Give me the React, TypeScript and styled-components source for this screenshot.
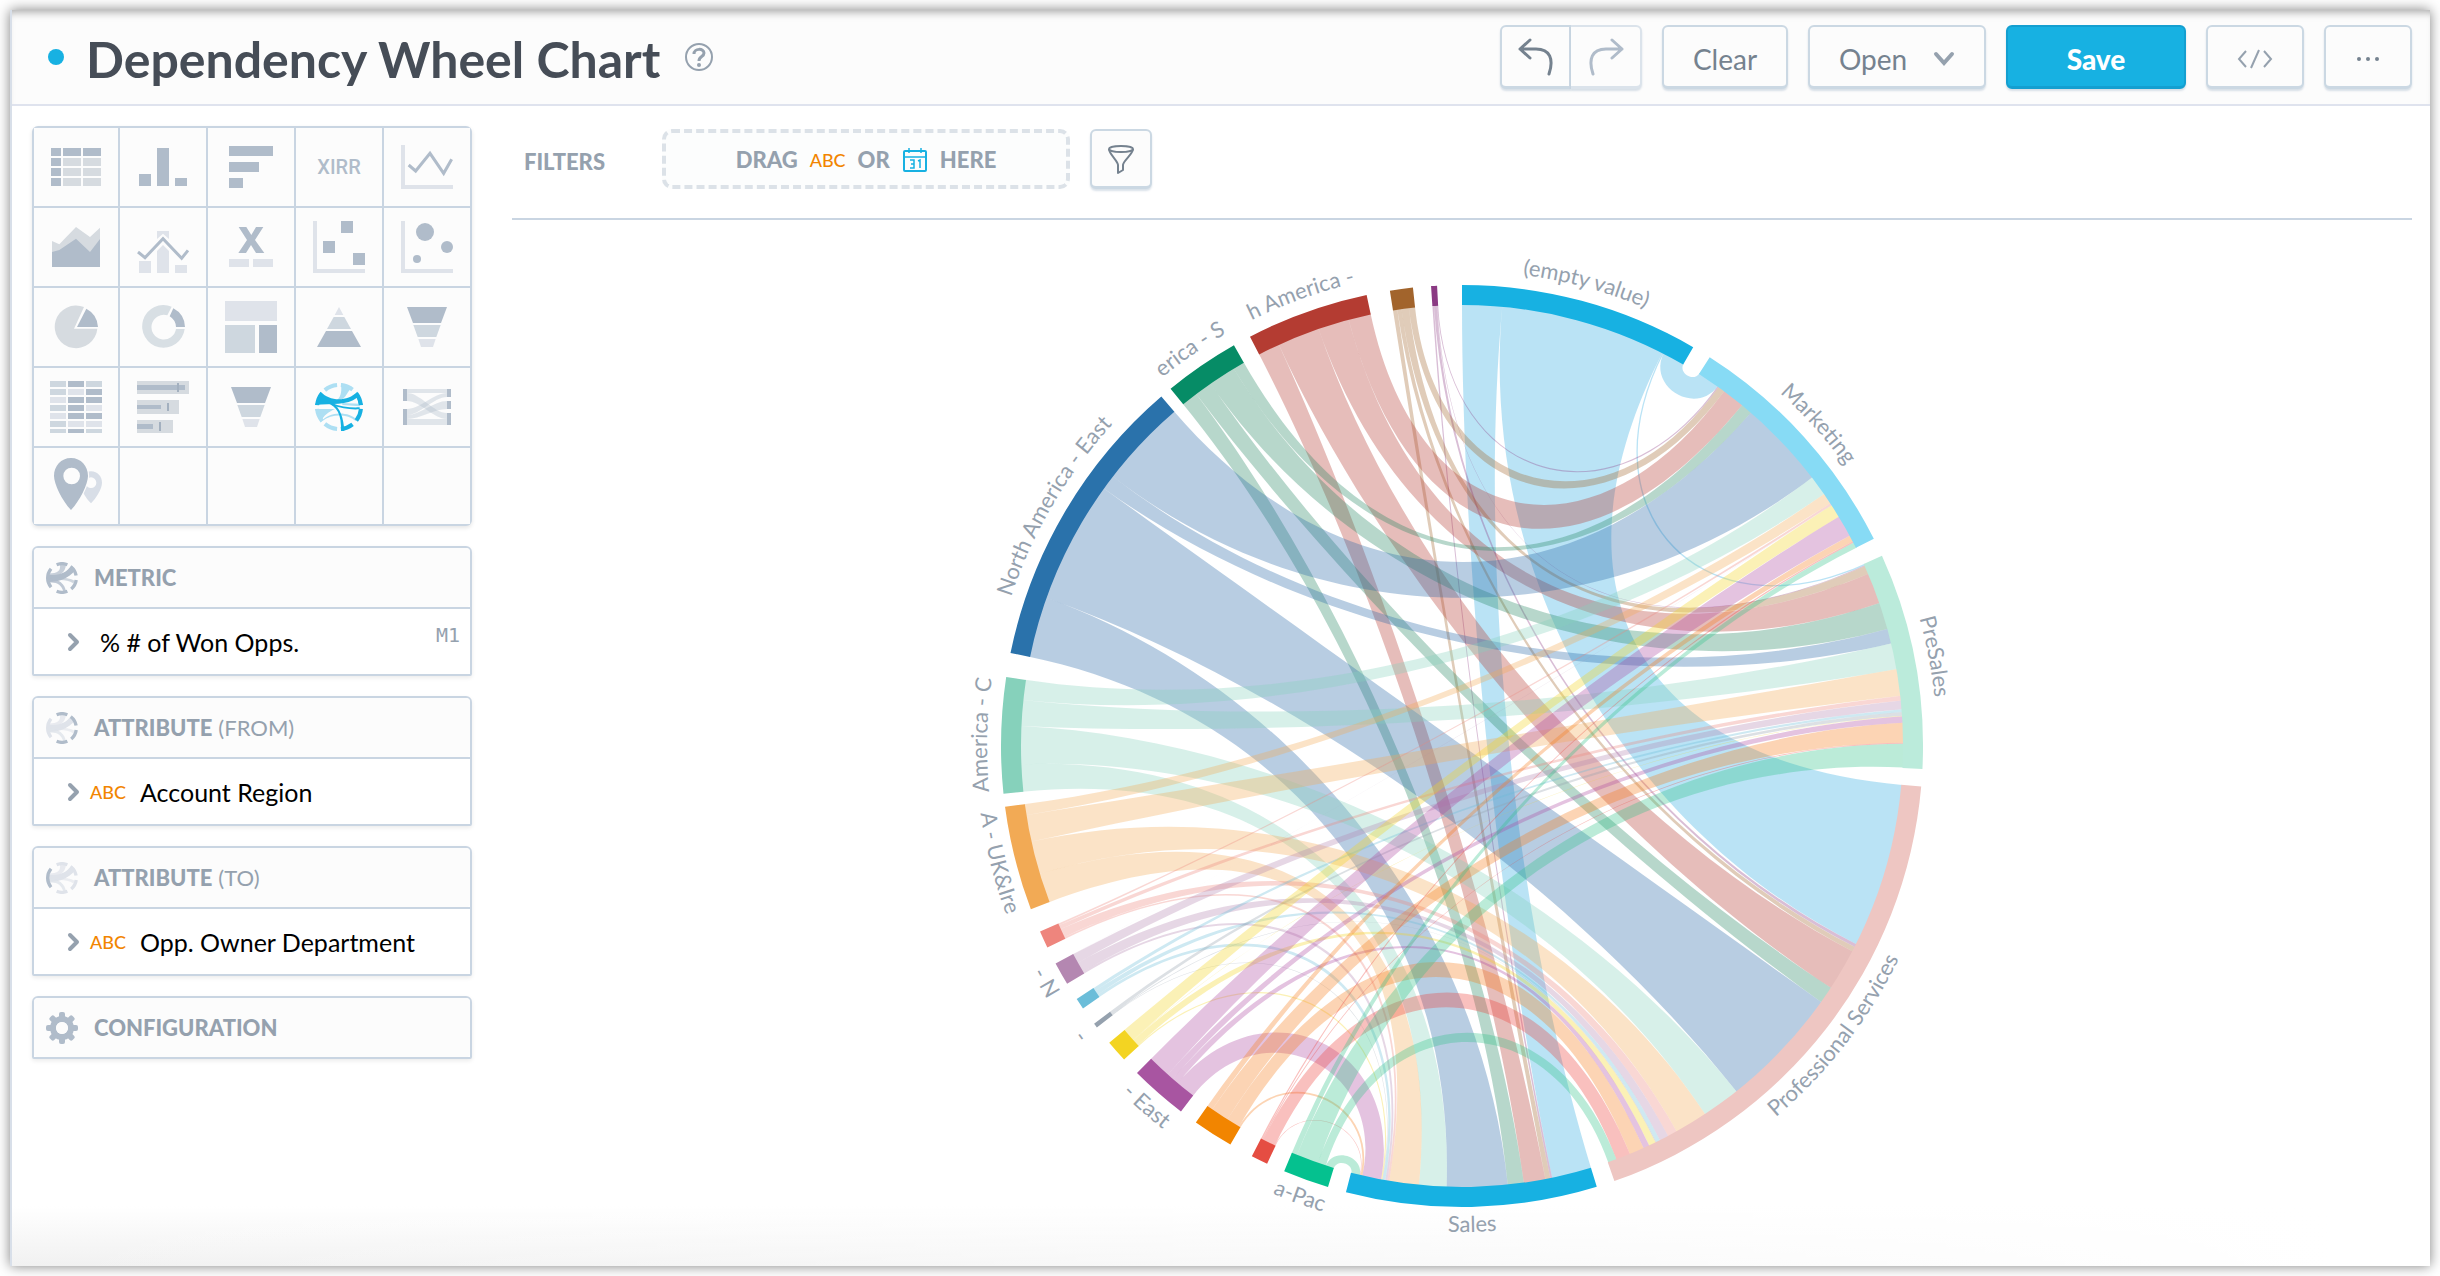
import React from "react";
import styled, { createGlobalStyle, css } from "styled-components";

const color = {
  line: "#c9d5e2",
  soft: "#dfe3ea",
  mist: "#d6dbe0",
  mid: "#ced7df",
  icon: "#b0bcca",
  label: "#95a1ae",
  slate: "#75828f",
  ink: "#464d57",
  blue: "#17b1e2",
  orange: "#f28500",
  panel: "#fcfcfc",
};

const GlobalStyle = createGlobalStyle`
  *, *::before, *::after { box-sizing: border-box; }
  body {
    margin: 0;
    background: #fff;
    font-family: Lato, "Open Sans", sans-serif;
    color: #000;
  }
  button { font: inherit; color: inherit; cursor: pointer; margin: 0; }
  h1, h2, p { margin: 0; }
  svg { display: block; }
`;

const Page = styled.div`
  min-height: 100vh;
  padding: 10px;
  display: flex;
`;

const Frame = styled.main`
  flex: 1;
  min-width: 0;
  display: flex;
  flex-direction: column;
  border-left: 2px solid #d8dfe9;
  background:
    linear-gradient(to right, rgba(255, 255, 255, 0), #fff 96%) bottom / 100% 60px no-repeat,
    linear-gradient(to bottom, #fff, #f1f1f1) bottom / 100% 60px no-repeat,
    #fff;
  box-shadow: 0 0 12px rgba(0, 0, 0, 0.5);
`;

const Header = styled.header`
  display: flex;
  align-items: center;
  justify-content: space-between;
  height: 96px;
  padding: 0 18px 0 36px;
  border-bottom: 2px solid #dfe3ee;
  background: ${color.panel};
  box-shadow: inset 0 8px 8px -6px rgba(0, 0, 0, 0.35);
`;

const TitleGroup = styled.div`
  display: flex;
  align-items: center;
`;

const StatusDot = styled.span`
  width: 16px;
  height: 16px;
  border-radius: 50%;
  background: ${color.blue};
  margin-right: 22px;
`;

const Title = styled.h1`
  padding-top: 4px;
  font-size: 50px;
  line-height: 60px;
  font-weight: 700;
  color: ${color.ink};
`;

const HelpButton = styled.button`
  padding: 0;
  margin-left: 24px;
  border: 0;
  background: none;
  color: ${color.label};
`;

const Actions = styled.div`
  display: flex;
  gap: 20px;
`;

const raised = css`
  display: flex;
  align-items: center;
  justify-content: center;
  border: 2px solid #cbd8e3;
  border-radius: 6px;
  background: ${color.panel};
  color: ${color.slate};
  box-shadow: 0 2px 2px rgba(160, 180, 200, 0.4);
`;

const ActionButton = styled.button<{ $width: number; $primary?: boolean }>`
  ${raised}
  width: ${(p) => p.$width}px;
  height: 64px;
  padding: 4px 0 0;
  gap: 26px;
  font-size: 28px;
  line-height: 36px;
  border-bottom-width: 3px;
  ${(p) =>
    p.$primary &&
    css`
      background: ${color.blue};
      border-color: #149fd0;
      color: #fff;
      font-weight: 900;
    `}
`;

const HistoryGroup = styled.div`
  display: flex;
  border-radius: 6px;
`;

const HistoryButton = styled.button<{ $side: "left" | "right" }>`
  ${raised}
  width: 71px;
  height: 64px;
  padding: 0;
  border-bottom-width: 3px;
  ${(p) =>
    p.$side === "left"
      ? css`
          border-radius: 6px 0 0 6px;
        `
      : css`
          border-radius: 0 6px 6px 0;
          border-left: 0;
          border-color: #dbe3eb;
          color: ${color.icon};
        `}
`;

const Body = styled.div`
  flex: 1;
  display: flex;
  align-items: flex-start;
  gap: 40px;
  padding: 20px 18px 0 20px;
`;

const Sidebar = styled.aside`
  flex: 0 0 440px;
  display: flex;
  flex-direction: column;
  gap: 20px;
`;

const ChartPicker = styled.div`
  display: grid;
  grid-template-columns: 84px repeat(4, 1fr);
  grid-template-rows: repeat(4, 78px) 76px;
  gap: 2px;
  padding: 2px;
  border-radius: 6px;
  background: ${color.line};
  overflow: hidden;
  box-shadow: 0 2px 4px rgba(0, 0, 0, 0.1);
`;

const ChartCell = styled.button`
  display: flex;
  align-items: center;
  justify-content: center;
  padding: 0;
  border: 0;
  background: ${color.panel};
`;

const EmptyCell = styled.div`
  background: ${color.panel};
`;

const PickerText = styled.span`
  font-family: Roboto, sans-serif;
  font-size: 20px;
  font-weight: 500;
  color: ${color.icon};
`;

const Panel = styled.section`
  border: 2px solid ${color.line};
  border-radius: 6px 6px 2px 2px;
  background: #fff;
  box-shadow: 0 2px 4px rgba(0, 0, 0, 0.08);
`;

const PanelHeader = styled.h2`
  display: flex;
  align-items: center;
  gap: 16px;
  height: 59px;
  padding: 0 12px;
  border-radius: 4px;
  background: ${color.panel};
  font-size: 22px;
  line-height: 28px;
  font-weight: 900;
  color: ${color.label};

  small {
    font-size: 22px;
    font-weight: 400;
    margin-left: -10px;
  }
`;

const PanelRow = styled.button`
  display: flex;
  align-items: center;
  width: 100%;
  height: 67px;
  padding: 0 10px 0 32px;
  border: 0;
  border-top: 2px solid ${color.line};
  background: #fff;
  text-align: left;
`;

const FieldName = styled.span<{ $gap: number }>`
  margin-left: ${(p) => p.$gap}px;
  font-size: 25px;
  line-height: 32px;
`;

const TextType = styled.span`
  margin-left: 10px;
  font-size: 18px;
  line-height: 24px;
  font-weight: 500;
  color: ${color.orange};
`;

const MetricId = styled.span`
  align-self: flex-start;
  margin-left: auto;
  padding-top: 12px;
  font-family: "DejaVu Sans Mono", monospace;
  font-size: 20px;
  line-height: 28px;
  color: ${color.label};
`;

const Content = styled.section`
  flex: 1;
  min-width: 0;
  display: flex;
  flex-direction: column;
`;

const FilterBar = styled.div`
  display: flex;
  align-items: flex-start;
  height: 94px;
  padding: 3px 0 0 12px;
  border-bottom: 2px solid ${color.line};
`;

const FilterTitle = styled.h2`
  width: 138px;
  font-size: 22px;
  line-height: 66px;
  font-weight: 900;
  color: ${color.label};
`;

const DropZone = styled.div`
  display: flex;
  align-items: center;
  justify-content: center;
  gap: 12px;
  width: 408px;
  height: 60px;
  padding-top: 2px;
  border: 4px dashed #dce2e8;
  border-radius: 10px;
  background: #fcfdfd;
  font-size: 22px;
  line-height: 28px;
  font-weight: 900;
  color: ${color.label};
`;

const DropType = styled.span`
  font-size: 18px;
  font-weight: 500;
  color: ${color.orange};
`;

const FilterButton = styled.button`
  ${raised}
  width: 62px;
  height: 60px;
  margin-left: 20px;
  padding: 0;
  border-bottom-width: 3px;
`;

const Chart = styled.figure`
  margin: 6px 0 0;
  display: flex;
  justify-content: center;

  svg {
    width: 100%;
    max-width: 1040px;
    height: auto;
  }
`;

const WheelLabel = styled.text`
  font-size: 22px;
  fill: ${color.label};
`;

/* ---------- wheel data ---------- */

const CENTER = { x: 0, y: 0 };
const OUTER = 461;
const INNER = 441;
const CURVE = 0.6;

type Target = { name: string; color: string; start: number; end: number; bounds: number[] };
type Source = { name: string; color: string; link?: string; start: number; end: number };

// Receiving arcs; bounds hold the angle at which each source's share ends, clockwise.
const targets: Target[] = [
  {
    name: "Marketing", color: "#87dbf5", start: 32.5, end: 63.3,
    bounds: [35.4, 35.55, 36.48, 39.42, 40.91, 52.51, 55.17, 56.6, 56.88, 56.91, 56.91, 56.91, 58.67, 61.53, 62.35, 62.55, 63.3],
  },
  {
    name: "PreSales", color: "#bbebdb", start: 65.64, end: 92.86,
    bounds: [65.82, 65.92, 67.04, 71.1, 74.62, 76.56, 79.96, 83.48, 84.08, 85.22, 85.6, 86.08, 86.15, 87, 89.57, 89.72, 92.8],
  },
  {
    name: "Professional Services", color: "#eec6c2", start: 95.05, end: 160.7,
    bounds: [116.67, 117.1, 117.73, 123.25, 125.48, 141.54, 146.56, 150.88, 152.14, 153.34, 153.85, 153.97, 154.89, 155.7, 157.62, 159.51, 160.65],
  },
  {
    name: "Sales", color: color.blue, start: 163, end: 194.58,
    bounds: [168.2, 168.45, 169.1, 171.94, 174.04, 182, 185.6, 189.49, 189.75, 190.02, 190.35, 190.42, 190.57, 193.06, 193.3, 193.38, 194.5],
  },
];

// Sending arcs, in the order in which the receiving arcs list them.
const sources: Source[] = [
  { name: "(empty value)", color: color.blue, link: "#2eaae1", start: 0, end: 30.1 },
  { name: "", color: "#8b3a83", start: 356.15, end: 356.9 },
  { name: "", color: "#a2642c", start: 351, end: 353.89 },
  { name: "h America -", color: "#b43c32", link: "#b3372e", start: 332.62, end: 348.06 },
  { name: "erica - S", color: "#068c66", link: "#258661", start: 320.79, end: 330.35 },
  { name: "North America - East", color: "#2a72ab", link: "#2867a7", start: 281.65, end: 319.29 },
  { name: "America - C", color: "#86d1bb", start: 264.06, end: 278.61 },
  { name: "A - UK&Ire", color: "#f2aa55", start: 249.27, end: 262.42 },
  { name: "", color: "#ee857d", start: 244.09, end: 246.26 },
  { name: "- N", color: "#b487b1", start: 238.94, end: 241.84 },
  { name: "", color: "#6bbdd9", start: 235.3, end: 236.7 },
  { name: "-", color: "#95a1ae", start: 232.38, end: 232.95 },
  { name: "", color: "#f3d422", start: 227.14, end: 229.93 },
  { name: "- East", color: "#a855a1", link: "#ad49a1", start: 217.56, end: 224.83 },
  { name: "", color: "#f28500", link: "#f67d1c", start: 210.16, end: 215.26 },
  { name: "", color: "#e54d42", link: "#ed4039", start: 205.01, end: 207.12 },
  { name: "a-Pac", color: "#05c18f", link: "#31c289", start: 196.9, end: 202.69 },
];

const rad = (deg: number) => (deg * Math.PI) / 180;
const at = (deg: number, r: number) => ({
  x: CENTER.x + Math.sin(rad(deg)) * r,
  y: CENTER.y - Math.cos(rad(deg)) * r,
});
const pt = (p: { x: number; y: number }) => `${p.x.toFixed(2)} ${p.y.toFixed(2)}`;

function ringPath(a: number, b: number, outer: number, inner: number) {
  const big = b - a > 180 ? 1 : 0;
  return `M${pt(at(a, outer))}A${outer} ${outer} 0 ${big} 1 ${pt(at(b, outer))}L${pt(at(b, inner))}A${inner} ${inner} 0 ${big} 0 ${pt(at(a, inner))}Z`;
}

function linkPath(base: [number, number, number, number]) {
  const corners = base.map((angle, i) => {
    let distance = Math.abs(rad(base[3 - i] - angle));
    if (distance > Math.PI) distance = 2 * Math.PI - distance;
    const curve = distance < 1 ? CURVE * distance : CURVE;
    return { p: at(angle, INNER + 1), c: at(angle, (INNER + 1) * (1 - curve)) };
  });
  const arc = `A${INNER} ${INNER} 0 0 1`;
  return `M${pt(corners[0].p)}${arc} ${pt(corners[1].p)}C${pt(corners[1].c)} ${pt(corners[2].c)} ${pt(corners[2].p)}${arc} ${pt(corners[3].p)}C${pt(corners[3].c)} ${pt(corners[0].c)} ${pt(corners[0].p)}Z`;
}

const links = sources.flatMap((source, s) => {
  const shares = targets.map((t) => {
    const from = s === 0 ? t.start : t.bounds[s - 1];
    return { from, to: t.bounds[s], width: t.bounds[s] - from };
  });
  const total = shares.reduce((sum, share) => sum + share.width, 0);
  const scale = (source.end - source.start) / total;
  let cursor = source.start;
  return [...shares]
    .reverse()
    .filter((share) => share.width > 0.005)
    .map((share) => {
      const start = cursor;
      cursor += share.width * scale;
      return { fill: source.link ?? source.color, d: linkPath([start, cursor, share.from, share.to]) };
    });
});

function labelPath(start: number, end: number) {
  const middle = (start + end) / 2;
  const reversed = middle > 90 && middle < 270;
  const r = reversed ? OUTER + 25 : OUTER + 14;
  const from = at(reversed ? middle + 40 : middle - 40, r);
  const to = at(reversed ? middle - 40 : middle + 40, r);
  return `M${pt(from)}A${r} ${r} 0 0 ${reversed ? 0 : 1} ${pt(to)}`;
}

function DependencyWheel() {
  const nodes = [...targets, ...sources];
  return (
    <svg viewBox="-520 -520 1040 1020" role="img" aria-label="Dependency wheel of account regions and departments">
      <g fillOpacity={0.33}>
        {links.map((link, i) => (
          <path key={i} d={link.d} fill={link.fill} />
        ))}
      </g>
      {nodes.map((node, i) => (
        <path key={i} d={ringPath(node.start, node.end, OUTER, INNER)} fill={node.color} />
      ))}
      {nodes.map((node, i) =>
        node.name ? (
          <React.Fragment key={i}>
            <path id={`rim-${i}`} d={labelPath(node.start, node.end)} fill="none" />
            <WheelLabel textAnchor="middle">
              <textPath href={`#rim-${i}`} startOffset="50%">
                {node.name}
              </textPath>
            </WheelLabel>
          </React.Fragment>
        ) : null
      )}
    </svg>
  );
}

/* ---------- icons ---------- */

const PickerIcon = ({ children }: { children: React.ReactNode }) => (
  <svg width="56" height="56" viewBox="-84 -84 168 168" aria-hidden="true">
    {children}
  </svg>
);

type Box = [number, number, number, number];
const Boxes = ({ fill, list }: { fill: string; list: Box[] }) => (
  <g fill={fill}>
    {list.map(([x, y, w, h], i) => (
      <rect key={i} x={x} y={y} width={w} height={h} />
    ))}
  </g>
);

const axes: Box[] = [
  [-78, -78, 12, 156],
  [-78, 66, 156, 12],
];

const tableCols = [[-75, 30], [-39, 54], [21, 54]];
const tableRows = [-57, -27, 3, 33];
const heatCols = [-78, -24, 30];
const heatRows = ["mdm", "mld", "ldd", "mdl", "ldd", "mll", "mdm"];
const heatFill: Record<string, string> = { m: color.mid, d: color.icon, l: color.soft };

const Funnel = () => (
  <PickerIcon>
    <path d="M-60-60H60L42-12H-42Z" fill={color.icon} />
    <path d="M-41-6H41L28 30H-28Z" fill={color.mid} />
    <path d="M-26 36H26L18 60H-18Z" fill={color.soft} />
  </PickerIcon>
);

const Arcs = ({ list, r, width }: { list: [number, number, string][]; r: number; width: number }) => (
  <>
    {list.map(([a, b, fill]) => (
      <path key={a} d={ringPath(a, b, r, r - width)} fill={fill} />
    ))}
  </>
);

const pale = "#addff3";
const pickers: { name: string; icon: React.ReactNode }[] = [
  {
    name: "Table",
    icon: (
      <PickerIcon>
        {tableRows.map((y, r) =>
          tableCols.map(([x, w], c) => (
            <rect key={`${r}${c}`} x={x} y={y} width={w} height={24} fill={r === 0 || c === 0 ? color.icon : color.mist} />
          ))
        )}
      </PickerIcon>
    ),
  },
  {
    name: "Column chart",
    icon: (
      <PickerIcon>
        <Boxes fill={color.icon} list={[[-72, 21, 36, 36], [-18, -57, 36, 114], [36, 33, 36, 24]]} />
      </PickerIcon>
    ),
  },
  {
    name: "Bar chart",
    icon: (
      <PickerIcon>
        <Boxes fill={color.icon} list={[[-66, -63, 132, 30], [-66, -15, 90, 30], [-66, 33, 42, 30]]} />
      </PickerIcon>
    ),
  },
  { name: "XIRR", icon: <PickerText>XIRR</PickerText> },
  {
    name: "Line chart",
    icon: (
      <PickerIcon>
        <Boxes fill={color.soft} list={[[-78, -66, 12, 132], [-78, 54, 156, 12]]} />
        <path d="M-55-6L-34 12L9-41L50 19L74-23" fill="none" stroke={color.icon} strokeWidth="9" />
      </PickerIcon>
    ),
  },
  {
    name: "Area chart",
    icon: (
      <PickerIcon>
        <path d="M-72-18L-50-8L0-60L42-30L72-58V60H-72Z" fill={color.mist} />
        <path d="M-72 15L-50 9L0-25L42 15L72-24V60H-72Z" fill={color.icon} />
      </PickerIcon>
    ),
  },
  {
    name: "Combo chart",
    icon: (
      <PickerIcon>
        <Boxes fill={color.soft} list={[[-72, 42, 36, 36], [36, 54, 36, 24]]} />
        <path d="M-18-48H18V-24L0-40L-18-24ZM-18 12L0-6L18 12V78H-18Z" fill={color.soft} />
        <path d="M-75 15L-54 32L0-25L56 34L75 10" fill="none" stroke={color.icon} strokeWidth="9" />
      </PickerIcon>
    ),
  },
  {
    name: "Headline",
    icon: (
      <PickerIcon>
        <path d="M-37-60H-14L1-36L15-60H37L12-21L40 18H15L0-6L-15 18H-38L-12-21Z" fill={color.icon} />
        <Boxes fill={color.soft} list={[[-66, 36, 60, 24], [6, 36, 60, 24]]} />
      </PickerIcon>
    ),
  },
  {
    name: "Scatter plot",
    icon: (
      <PickerIcon>
        <Boxes fill={color.soft} list={axes} />
        <Boxes fill={color.icon} list={[[6, -78, 36, 36], [-48, -18, 36, 36], [42, 18, 36, 36]]} />
      </PickerIcon>
    ),
  },
  {
    name: "Bubble chart",
    icon: (
      <PickerIcon>
        <Boxes fill={color.soft} list={axes} />
        <g fill={color.icon}>
          <circle cx="-6" cy="-45" r="27" />
          <circle cx="60" cy="0" r="18" />
          <circle cx="-30" cy="36" r="12" />
        </g>
      </PickerIcon>
    ),
  },
  {
    name: "Pie chart",
    icon: (
      <PickerIcon>
        <path d="M-6 5L24-60A64 64 0 1 0 64 5Z" fill={color.mist} />
        <path d="M3 0L31-55A66 66 0 0 1 66 0Z" fill={color.icon} />
      </PickerIcon>
    ),
  },
  {
    name: "Donut chart",
    icon: (
      <PickerIcon>
        <path d="M26-61A64 64 0 1 0 65 6H39A37 37 0 1 1 13-35Z" fill="#d8dfe4" />
        <path d="M31-56A66 66 0 0 1 66 0H39A40 40 0 0 0 20-32Z" fill={color.icon} />
      </PickerIcon>
    ),
  },
  {
    name: "Tree map",
    icon: (
      <PickerIcon>
        <Boxes fill={color.soft} list={[[-78, -78, 156, 60]]} />
        <Boxes fill={color.mid} list={[[-78, -6, 90, 84]]} />
        <Boxes fill={color.icon} list={[[24, -6, 54, 84]]} />
      </PickerIcon>
    ),
  },
  {
    name: "Pyramid chart",
    icon: (
      <PickerIcon>
        <path d="M0-60L13-36H-13Z" fill={color.soft} />
        <path d="M-16-30H16L36 6H-36Z" fill={color.mid} />
        <path d="M-39 12H39L66 60H-66Z" fill={color.icon} />
      </PickerIcon>
    ),
  },
  { name: "Funnel chart", icon: <Funnel /> },
  {
    name: "Heat map",
    icon: (
      <PickerIcon>
        {heatRows.map((row, r) =>
          heatCols.map((x, c) => (
            <rect key={`${r}${c}`} x={x} y={-78 + r * 24} width={48} height={r === 6 ? 12 : 18} fill={heatFill[row[c]]} />
          ))
        )}
      </PickerIcon>
    ),
  },
  {
    name: "Bullet chart",
    icon: (
      <PickerIcon>
        <Boxes fill={color.mist} list={[[-78, -78, 156, 39], [-78, -21, 126, 42], [-78, 39, 108, 39]]} />
        <Boxes fill={color.icon} list={[[-78, -66, 144, 15], [-78, -6, 72, 12], [-78, 51, 48, 15]]} />
        <Boxes fill="#a3b0bf" list={[[42, -72, 6, 27], [12, -12, 6, 24], [-12, 45, 6, 27]]} />
      </PickerIcon>
    ),
  },
  { name: "Conversion funnel", icon: <Funnel /> },
  {
    name: "Dependency wheel chart",
    icon: (
      <PickerIcon>
        <g fill={pale}>
          <path d="M6-72L40-60C18-40 22-20 -6-20C8-34 8-50 6-72Z" />
          <path d="M-72 6H-12C-30 14 -46 24 -55 46Z" />
          <path d="M-55 46C-34 14 26 10 54 38L50 42C24 20 -20 20 -50 42Z" />
          <path d="M10-12L62-10V-2L10-6Z" />
        </g>
        <g fill={color.blue}>
          <path d="M-55-46C-30-18 24-14 55-46L72-6H60L54-28C24-4 -20-12 -72-6Z" />
          <path d="M-36-12C-6-2 8 22 6 72H16C14 34 4 4 -20-14Z" />
          <path d="M-20-11C6 0 34 2 62 1V7C34 9 6 4 -20-5Z" />
        </g>
        <Arcs
          r={72}
          width={12}
          list={[[-40, -5, pale], [5, 38, pale], [185, 220, pale], [230, 265, pale], [52, 85, color.blue], [95, 128, color.blue], [142, 175, color.blue], [275, 309, color.blue]]}
        />
      </PickerIcon>
    ),
  },
  {
    name: "Sankey chart",
    icon: (
      <PickerIcon>
        <g fill={color.icon} fillOpacity="0.36">
          <path d="M-60-54H60V-42H-60Z" />
          <path d="M-60-42C-20-42 20 18 60 18V36C20 36-20-18-60-18Z" />
          <path d="M-60 6C-20 6 20-42 60-42V-30C20-30-20 24-60 24Z" />
          <path d="M-60 24C-20 24 20-18 60-18V6C20 6-20 36-60 36Z" />
          <path d="M-60 36H60V54H-60Z" />
        </g>
        <Boxes fill={color.icon} list={[[-72, -54, 12, 36], [-72, 6, 12, 48], [60, -54, 12, 24], [60, -18, 12, 24], [60, 18, 12, 36]]} />
      </PickerIcon>
    ),
  },
  {
    name: "Geo map",
    icon: (
      <PickerIcon>
        <path fillRule="evenodd" d="M45-44C65-44 78-28 78-10C78 10 60 36 45 52C30 36 12 10 12-10C12-28 25-44 45-44ZM45-26A15 15 0 1 0 45 6A15 15 0 1 0 45-26Z" fill="#d8dee7" />
        <path fillRule="evenodd" stroke={color.panel} strokeWidth="7" paintOrder="stroke" d="M-15-84C15-84 36-60 36-30C36-6 12 44-15 72C-42 44-66-6-66-30C-66-60-45-84-15-84ZM-13-55A25 25 0 1 0-13-5A25 25 0 1 0-13-55Z" fill={color.icon} />
      </PickerIcon>
    ),
  },
];

type Tone = "all" | "from" | "to";
function WheelIcon({ tone }: { tone: Tone }) {
  const left = tone === "from" ? color.soft : color.icon;
  const rest = tone === "to" ? color.soft : color.icon;
  const chord = tone === "all" ? color.icon : color.soft;
  return (
    <svg width="32" height="32" viewBox="-48 -48 96 96" aria-hidden="true">
      <g fill={chord}>
        <path d="M-40-14C-12-14-4-22-6-40H12C10-18-4-4-40-2Z" fillOpacity="0.7" />
        <path d="M-40-10C-10-6 14-14 28-38L40-24C20 2-10 12-40 12Z" />
        <path d="M-36-2C0-4 24 0 38 8L34 16C14 4-8 4-36 10Z" fillOpacity="0.6" />
        <path d="M-40 2C-8 2 8 18 12 40L4 40C-2 22-14 12-38 14Z" fillOpacity="0.8" />
      </g>
      <Arcs r={48} width={10} list={[[230, 310, left], [-22, 22, rest], [38, 80, rest], [98, 140, rest], [158, 202, rest]]} />
    </svg>
  );
}

const GearIcon = () => (
  <svg width="32" height="32" viewBox="-16 -16 32 32" aria-hidden="true">
    <g fill={color.icon}>
      {[0, 45, 90, 135].map((turn) => (
        <rect key={turn} x="-3" y="-16" width="6" height="32" rx="2" transform={`rotate(${turn})`} />
      ))}
    </g>
    <circle r="9" fill={color.panel} stroke={color.icon} strokeWidth="6" />
    <circle r="6" fill={color.panel} />
  </svg>
);

const Caret = () => (
  <svg width="14" height="20" viewBox="0 0 14 20" fill="none" stroke={color.label} strokeWidth="4" strokeLinecap="round" strokeLinejoin="round" aria-hidden="true">
    <path d="M4 3L11 10L4 17" />
  </svg>
);

const HelpIcon = () => (
  <svg width="30" height="30" viewBox="0 0 30 30" fill="none" stroke="currentColor" aria-hidden="true">
    <circle cx="15" cy="15" r="13" strokeWidth="2" />
    <path d="M10 12C10 6 20 6 20 11C20 15 15 14 15 19" strokeWidth="3" />
    <circle cx="15" cy="23" r="2" fill="currentColor" stroke="none" />
  </svg>
);

const UndoIcon = ({ flip }: { flip?: boolean }) => (
  <svg width="36" height="40" viewBox="0 0 36 40" fill="none" stroke="currentColor" strokeWidth="3" strokeLinecap="round" strokeLinejoin="round" aria-hidden="true">
    <path transform={flip ? "translate(36 0) scale(-1 1)" : undefined} d="M12 3L2 12L12 21M2 12H18C32 12 36 22 31 37" />
  </svg>
);

const CalendarIcon = () => (
  <svg width="26" height="26" viewBox="0 0 26 26" fill="none" stroke={color.blue} strokeWidth="2" aria-hidden="true">
    <rect x="2" y="4" width="22" height="20" rx="1" />
    <path d="M2 10H24M7 1V6M19 1V6M8 13H12V21H8M9 17H12M16 14L18 13V21" strokeWidth="1.5" />
  </svg>
);

const FilterIcon = () => (
  <svg width="28" height="30" viewBox="0 0 28 30" fill="none" stroke="currentColor" strokeWidth="2" strokeLinejoin="round" aria-hidden="true">
    <ellipse cx="14" cy="5" rx="12" ry="3" />
    <path d="M2 5C2 10 11 17 11 21V29L16 26V21C16 17 26 10 26 5" />
  </svg>
);

/* ---------- page ---------- */

const fields: { title: string; note?: string; tone: Tone; value: string; id?: string }[] = [
  { title: "METRIC", tone: "all", value: "% # of Won Opps.", id: "M1" },
  { title: "ATTRIBUTE", note: "(FROM)", tone: "from", value: "Account Region" },
  { title: "ATTRIBUTE", note: "(TO)", tone: "to", value: "Opp. Owner Department" },
];

export default function App() {
  return (
    <Page>
      <GlobalStyle />
      <Frame>
        <Header>
          <TitleGroup>
            <StatusDot />
            <Title>Dependency Wheel Chart</Title>
            <HelpButton aria-label="Help">
              <HelpIcon />
            </HelpButton>
          </TitleGroup>
          <Actions>
            <HistoryGroup>
              <HistoryButton $side="left" aria-label="Undo">
                <UndoIcon />
              </HistoryButton>
              <HistoryButton $side="right" aria-label="Redo">
                <UndoIcon flip />
              </HistoryButton>
            </HistoryGroup>
            <ActionButton $width={126}>Clear</ActionButton>
            <ActionButton $width={178} aria-haspopup="menu">
              Open
              <svg width="22" height="16" viewBox="0 0 22 16" fill="none" stroke={color.label} strokeWidth="4" strokeLinecap="round" aria-hidden="true">
                <path d="M3 3L11 12L19 3" />
              </svg>
            </ActionButton>
            <ActionButton $width={180} $primary>Save</ActionButton>
            <ActionButton $width={98} aria-label="Embed">
              <svg width="36" height="20" viewBox="0 0 36 20" fill="none" stroke={color.label} strokeWidth="2" aria-hidden="true">
                <path d="M9 2L2 10L9 18M27 2L34 10L27 18M22 1L14 19" />
              </svg>
            </ActionButton>
            <ActionButton $width={88} aria-label="More">
              <svg width="24" height="4" viewBox="0 0 24 4" fill={color.slate} aria-hidden="true">
                <circle cx="3" cy="2" r="2" />
                <circle cx="12" cy="2" r="2" />
                <circle cx="21" cy="2" r="2" />
              </svg>
            </ActionButton>
          </Actions>
        </Header>
        <Body>
          <Sidebar>
            <ChartPicker>
              {pickers.map((picker) => (
                <ChartCell key={picker.name} aria-label={picker.name}>
                  {picker.icon}
                </ChartCell>
              ))}
              {[0, 1, 2, 3].map((slot) => (
                <EmptyCell key={slot} />
              ))}
            </ChartPicker>
            {fields.map((field) => (
              <Panel key={field.value}>
                <PanelHeader>
                  <WheelIcon tone={field.tone} />
                  {field.title}
                  {field.note && <small>{field.note}</small>}
                </PanelHeader>
                <PanelRow>
                  <Caret />
                  {!field.id && <TextType>ABC</TextType>}
                  <FieldName $gap={field.id ? 20 : 14}>{field.value}</FieldName>
                  {field.id && <MetricId>{field.id}</MetricId>}
                </PanelRow>
              </Panel>
            ))}
            <Panel>
              <PanelHeader>
                <GearIcon />
                CONFIGURATION
              </PanelHeader>
            </Panel>
          </Sidebar>
          <Content>
            <FilterBar>
              <FilterTitle>FILTERS</FilterTitle>
              <DropZone>
                DRAG <DropType>ABC</DropType> OR <CalendarIcon /> HERE
              </DropZone>
              <FilterButton aria-label="Filter options">
                <FilterIcon />
              </FilterButton>
            </FilterBar>
            <Chart>
              <DependencyWheel />
            </Chart>
          </Content>
        </Body>
      </Frame>
    </Page>
  );
}
